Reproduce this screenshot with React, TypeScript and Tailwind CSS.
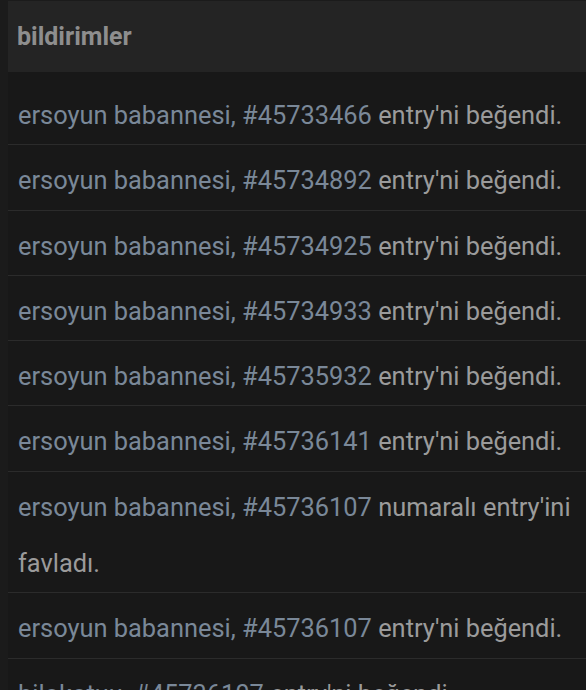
const items = [
  { user: 'ersoyun babannesi', id: '45733466', action: "entry'ni beğendi." },
  { user: 'ersoyun babannesi', id: '45734892', action: "entry'ni beğendi." },
  { user: 'ersoyun babannesi', id: '45734925', action: "entry'ni beğendi." },
  { user: 'ersoyun babannesi', id: '45734933', action: "entry'ni beğendi." },
  { user: 'ersoyun babannesi', id: '45735932', action: "entry'ni beğendi." },
  { user: 'ersoyun babannesi', id: '45736141', action: "entry'ni beğendi." },
  { user: 'ersoyun babannesi', id: '45736107', action: "numaralı entry'ini favladı." },
  { user: 'ersoyun babannesi', id: '45736107', action: "entry'ni beğendi." },
  { user: 'bilokotuu', id: '45736107', action: "entry'ni beğendi." },
]

export default function App() {
  return (
    <div className="min-h-[690px] h-[690px] overflow-hidden bg-[#1b1b1b] pl-2 font-['Roboto',sans-serif]">
      <div className="mt-px flex h-[71px] items-center bg-[#242424] px-[9px]">
        <h1 className="text-[25px] font-bold text-[#8e8e8e]">bildirimler</h1>
      </div>
      <ul className="bg-[#181818] pt-2">
        {items.map((item, i) => (
          <li
            key={i}
            className="border-b border-[#2b2b2b] px-[10px] pt-[7px] pb-[1px] text-[25.4px] leading-[56.3px] text-[#9b9b9b]"
          >
            <span className="text-[#7a8898]">
              {item.user}, #{item.id}
            </span>{' '}
            {item.action}
          </li>
        ))}
      </ul>
    </div>
  )
}
